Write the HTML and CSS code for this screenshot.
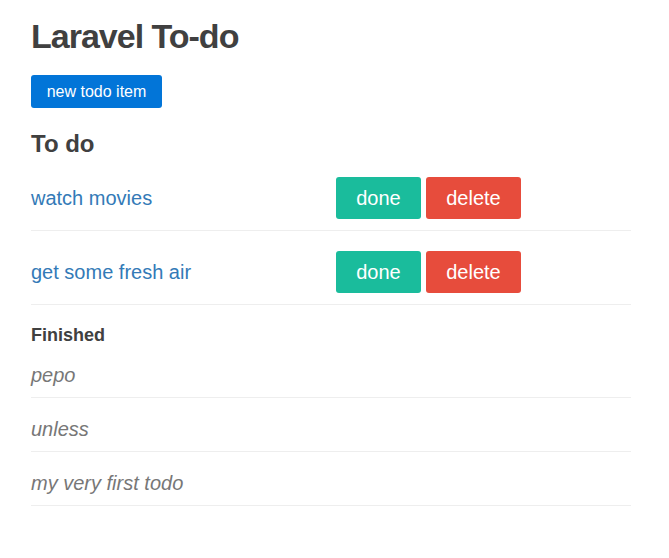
FILE: index.html
```html
<!DOCTYPE html>
<html>
<head>
    <title>Laravel To-do</title>
    <meta name="viewport" content="width=device-width, initial-scale=1.0">
    <link rel="stylesheet" href="styles.css">
</head>
<body>
    <div class="container">
        <h1 class="page-title">Laravel To-do</h1>
        <button class="btn btn-new">new todo item</button>

        <!-- open items -->
        <h2 class="section-title">To do</h2>
        <ul class="todo-list">
            <li class="todo-row">
                <a href="#" class="todo-link">watch movies</a>
                <div class="todo-actions">
                    <button class="btn btn-done">done</button>
                    <button class="btn btn-delete">delete</button>
                </div>
            </li>
            <li class="todo-row">
                <a href="#" class="todo-link">get some fresh air</a>
                <div class="todo-actions">
                    <button class="btn btn-done">done</button>
                    <button class="btn btn-delete">delete</button>
                </div>
            </li>
        </ul>

        <!-- finished items -->
        <h4 class="finished-title">Finished</h4>
        <ul class="finished-list">
            <li class="finished-row">pepo</li>
            <li class="finished-row">unless</li>
            <li class="finished-row">my very first todo</li>
        </ul>
    </div>
</body>
</html>
```

FILE: styles.css
```css
/* global */
body {
    margin: 0;
    background-color: #fff;
    color: #404040;
    font-family: "Liberation Sans", Arial, sans-serif;
}

.container {
    width: 600px;
    padding: 0 31px;
}

.page-title {
    margin: 18px 0 20px;
    font-size: 34px;
    line-height: 37px;
    letter-spacing: -1px;
    font-weight: bold;
}

/* buttons */
.btn {
    border: none;
    color: #fff;
    font-family: inherit;
    cursor: pointer;
}
.btn-new {
    display: block;
    width: 131px;
    height: 33px;
    padding: 0;
    background-color: #0275d8;
    border-radius: 3px;
    font-size: 16px;
}
.btn-done, .btn-delete {
    height: 42px;
    padding: 0;
    border-radius: 3px;
    font-size: 20px;
}
.btn-done {
    width: 85px;
    background-color: #1abc9c;
}
.btn-delete {
    width: 95px;
    background-color: #e74c3c;
}

/* to do list */
.section-title {
    margin: 23px 0 0;
    font-size: 24px;
    line-height: 26px;
    font-weight: bold;
}
.todo-list, .finished-list {
    list-style: none;
    margin: 0;
    padding: 0;
}
.todo-row {
    display: grid;
    grid-template-columns: 305px 1fr;
    align-items: center;
    padding: 20px 0 11px;
    border-bottom: 1px solid #eee;
}
.todo-link {
    color: #337ab7;
    text-decoration: none;
    font-size: 20px;
    line-height: 28px;
}
.todo-actions {
    display: flex;
    gap: 5px;
}

/* finished */
.finished-title {
    margin: 21px 0 0;
    font-size: 18px;
    line-height: 18px;
    font-weight: bold;
}
.finished-row {
    padding: 17px 0 8px;
    border-bottom: 1px solid #eee;
    color: #777;
    font-style: italic;
    font-size: 20px;
    line-height: 28px;
}
```
